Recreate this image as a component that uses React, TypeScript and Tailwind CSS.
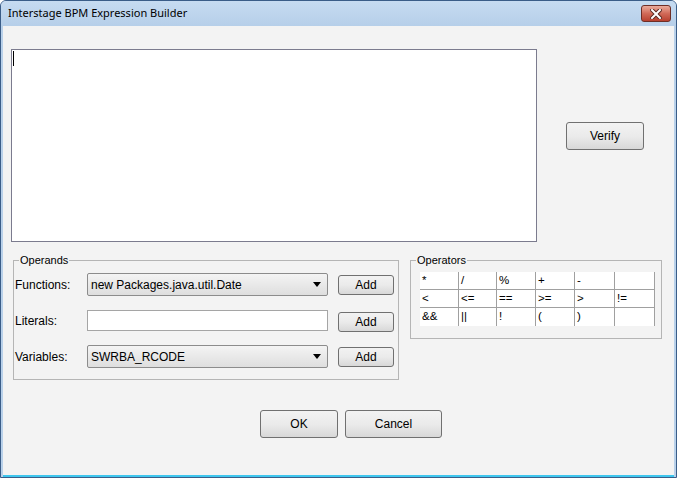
import React from 'react'

const ui = { fontFamily: '"Liberation Sans", Arial, sans-serif' }

function WinButton({ label, w, h = 'h-[28px]' }: { label: string; w: string; h?: string }) {
  return (
    <div
      className={`${w} ${h} flex items-center justify-center rounded-[3px] border border-[#707070] bg-gradient-to-b from-[#f2f2f2] via-[#ebebeb] to-[#d8d8d8] text-[12px] text-black`}
    >
      {label}
    </div>
  )
}

function Combo({ value }: { value: string }) {
  return (
    <div className="w-[241px] h-[23px] flex items-center justify-between rounded-[2px] border border-[#8c8c8c] bg-gradient-to-b from-[#f4f4f4] to-[#dedede] pl-[3px] pr-[6px] text-[12px] text-black">
      <span>{value}</span>
      <svg width="8" height="5" viewBox="0 0 8 5">
        <path d="M0 0h8L4 5z" fill="#000" />
      </svg>
    </div>
  )
}

function GroupBox({
  title,
  className,
  children,
}: {
  title: string
  className: string
  children: React.ReactNode
}) {
  return (
    <div className={`relative border border-[#b5b5b5] ${className}`}>
      <span className="absolute -top-[8px] left-[5px] bg-[#f3f3f3] px-[1px] text-[11px] leading-[14px] text-black">
        {title}
      </span>
      {children}
    </div>
  )
}

const operators = [
  ['*', '/', '%', '+', '-', ''],
  ['<', '<=', '==', '>=', '>', '!='],
  ['&&', '||', '!', '(', ')', ''],
]

export default function App() {
  return (
    <div className="w-[677px] h-[478px] overflow-hidden bg-white" style={ui}>
      <div className="w-[677px] h-[478px] flex flex-col rounded-t-[6px] border border-[#3a5d88] bg-[#b9d1ea]">
        {/* Title bar */}
        <div className="h-[25px] shrink-0 flex items-center justify-between rounded-t-[5px] bg-gradient-to-b from-[#c6dbf1] to-[#b6cfe9] pl-[7px] pr-[5px]">
          <span className="text-[11px] text-black" style={{ fontFamily: '"Noto Sans", "Open Sans", sans-serif' }}>
            Interstage BPM Expression Builder
          </span>
          <div className="w-[30px] h-[17px] flex items-center justify-center rounded-[3px] border border-[#6e2e26] bg-gradient-to-b from-[#e9ab9c] via-[#d16a58] to-[#b8402f]">
            <svg width="12" height="10" viewBox="0 0 12 10">
              <path d="M2 1l8 8M10 1L2 9" stroke="#5a2a22" strokeWidth="4" strokeLinecap="square" />
              <path d="M2 1l8 8M10 1L2 9" stroke="#fff" strokeWidth="2" strokeLinecap="square" />
            </svg>
          </div>
        </div>

        {/* Body */}
        <div className="flex-1 flex flex-col mx-[2px] border-b-[2px] border-[#3ec6ee] bg-[#f3f3f3]">
          {/* Expression area */}
          <div className="flex items-start pl-[8px] pt-[23px]">
            <div className="w-[526px] h-[193px] shrink-0 border border-[#7b7b8e] bg-white p-[1px]">
              <div className="w-[1px] h-[15px] bg-black" />
            </div>
            <div className="ml-[29px] mt-[73px]">
              <WinButton label="Verify" w="w-[78px]" />
            </div>
          </div>

          {/* Operands / Operators */}
          <div className="flex items-start pl-[10px] mt-[18px] gap-[11px]">
            <GroupBox title="Operands" className="w-[386px] h-[120px] pt-[12px] pl-[1px]">
              <div className="flex flex-col gap-[13px]">
                <div className="h-[23px] flex items-center">
                  <span className="w-[72px] text-[12px]">Functions:</span>
                  <Combo value="new Packages.java.util.Date" />
                  <div className="ml-[10px]">
                    <WinButton label="Add" w="w-[56px]" h="h-[20px]" />
                  </div>
                </div>
                <div className="h-[23px] flex items-center">
                  <span className="w-[72px] text-[12px]">Literals:</span>
                  <div className="w-[241px] h-[21px] border border-[#a5a5a5] bg-white" />
                  <div className="ml-[10px] mt-[3px]">
                    <WinButton label="Add" w="w-[56px]" h="h-[20px]" />
                  </div>
                </div>
                <div className="h-[23px] flex items-center">
                  <span className="w-[72px] text-[12px]">Variables:</span>
                  <Combo value="SWRBA_RCODE" />
                  <div className="ml-[10px]">
                    <WinButton label="Add" w="w-[56px]" h="h-[20px]" />
                  </div>
                </div>
              </div>
            </GroupBox>

            <GroupBox title="Operators" className="w-[252px] h-[79px] pt-[11px] pl-[9px]">
              <div className="grid grid-cols-[39px_38px_39px_39px_40px_40px] bg-white w-[235px]">
                {operators.map((row, r) =>
                  row.map((op, c) => (
                    <div
                      key={`${r}-${c}`}
                      className={`h-[18px] flex items-center pl-[2px] border-r border-[#a0a0a0] text-[11.5px] text-black ${
                        r < 2 ? 'border-b' : ''
                      }`}
                    >
                      {op}
                    </div>
                  ))
                )}
              </div>
            </GroupBox>
          </div>

          {/* Dialog buttons */}
          <div className="flex pl-[257px] mt-[30px] gap-[7px]">
            <WinButton label="OK" w="w-[78px]" />
            <WinButton label="Cancel" w="w-[97px]" />
          </div>
        </div>
      </div>
    </div>
  )
}
